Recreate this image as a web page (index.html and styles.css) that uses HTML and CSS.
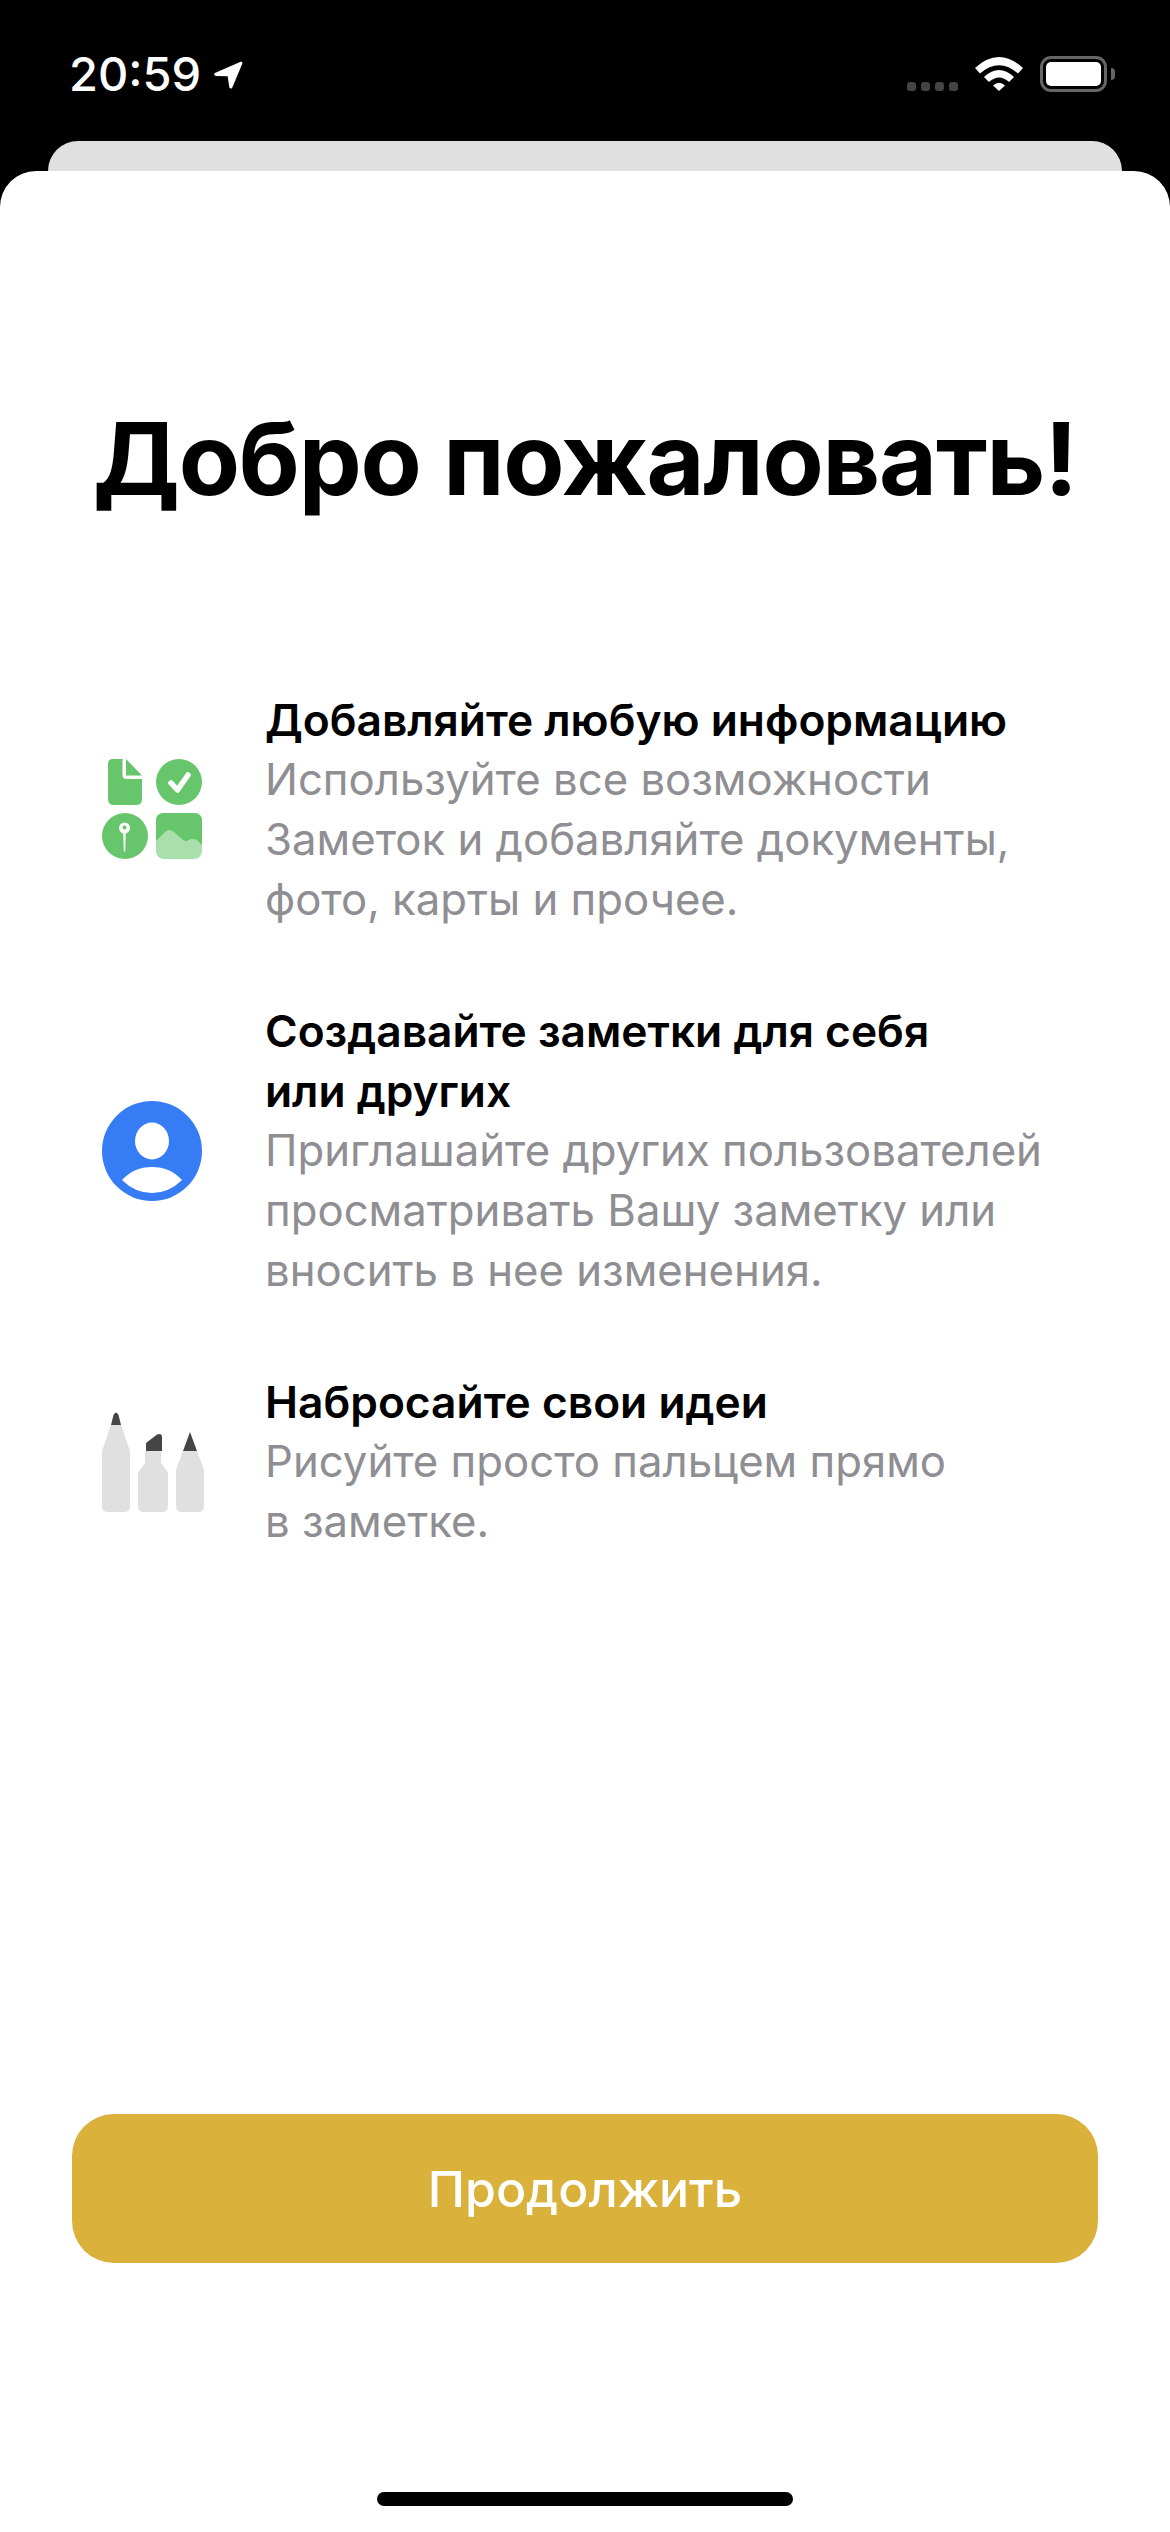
FILE: index.html
```html
<!DOCTYPE html>
<html lang="ru">
<head>
    <meta charset="utf-8">
    <title>Заметки</title>
    <link rel="stylesheet" href="styles.css">
</head>
<body>
    <div class="status">
        <div class="status-left">
            <span class="time">20:59</span>
            <svg class="arrow" width="30" height="31" viewBox="0 0 32 32">
                <path d="M2 14.5 L29.5 2.5 Q32 2 31.2 4.6 L20.5 30 Q18.6 32 17.4 29.6 L15.6 17.8 L3 17.6 Q0 16.2 2 14.5 Z" fill="#fff"/>
            </svg>
        </div>
        <div class="status-right">
            <div class="signal"><i></i><i></i><i></i><i></i></div>
            <svg class="wifi" width="48" height="36" viewBox="0 0 48 36">
                <path d="M0 13 Q24 -9 48 13 L43 18.5 Q24 2 5 18.5 Z" fill="#fff"/>
                <path d="M9 22 Q24 8 39 22 L34 27 Q24 18 14 27 Z" fill="#fff"/>
                <path d="M18 30.5 Q24 25 30 30.5 L24 36 Z" fill="#fff"/>
            </svg>
            <div class="battery"><div class="battery-level"></div></div>
            <div class="battery-cap"></div>
        </div>
    </div>

    <div class="back-card"></div>

    <div class="sheet">
        <h1 class="title">Добро пожаловать!</h1>

        <div class="rows">
            <div class="row">
                <div class="row-icon">
                    <svg width="102" height="102" viewBox="0 0 102 102">
                        <path d="M11 0 H20.500 V16 Q20.500 20 24.500 20 H40 V40 Q40 46 34 46 H12 Q6 46 6 40 V5 Q6 0 11 0 Z" fill="#67c56b"/>
                        <path d="M24 0 L40 16.500 H24 Z" fill="#67c56b"/>
                        <circle cx="77" cy="23" r="23" fill="#67c56b"/>
                        <path d="M69 24 L75.500 31 L86 16" fill="none" stroke="#fff" stroke-width="5.500" stroke-linecap="round" stroke-linejoin="round"/>
                        <circle cx="23" cy="77" r="23" fill="#67c56b"/>
                        <circle cx="22.500" cy="69" r="5.500" fill="#fff"/>
                        <circle cx="22.500" cy="68.500" r="2" fill="#67c56b"/>
                        <path d="M21.200 73 H23.800 L23.200 92 Q22.500 93.500 21.800 92 Z" fill="#fff"/>
                        <rect x="54" y="54" width="46" height="46" rx="8" fill="#a8dfab"/>
                        <path d="M62 54 H92 Q100 54 100 62 V86 L96 82 Q91 78 86 81.500 Q84 83 81 81 L72 73 Q67 69 63 73 L54 82 V62 Q54 54 62 54 Z" fill="#67c56b"/>
                    </svg>
                </div>
                <div class="row-text">
                    <div class="row-title">Добавляйте любую информацию</div>
                    <div class="row-desc">Используйте все возможности<br>Заметок и добавляйте документы,<br>фото, карты и прочее.</div>
                </div>
            </div>

            <div class="row">
                <div class="row-icon">
                    <svg width="100" height="100" viewBox="0 0 100 100">
                        <circle cx="50" cy="50" r="50" fill="#367df5"/>
                        <ellipse cx="50" cy="40" rx="17" ry="18.500" fill="#fff"/>
                        <path d="M20 79 Q32 66 50 66 Q68 66 80 79 Q67 92 50 92 Q33 92 20 79 Z" fill="#fff"/>
                    </svg>
                </div>
                <div class="row-text">
                    <div class="row-title">Создавайте заметки для себя<br>или других</div>
                    <div class="row-desc">Приглашайте других пользователей<br>просматривать Вашу заметку или<br>вносить в нее изменения.</div>
                </div>
            </div>

            <div class="row">
                <div class="row-icon">
                    <svg width="102" height="102" viewBox="0 0 102 102">
                        <path d="M9 14 H19 L27 37 Q28 39 28 42 V95 Q28 101 22 101 H6 Q0 101 0 95 V42 Q0 39 1 37 Z" fill="#e0e0e0"/>
                        <path d="M9 14 L11.500 4 Q14 -1 16.500 4 L19 14 Z" fill="#454545"/>
                        <path d="M43 40 H59 V52 L65 60 Q66 62 66 64 V95 Q66 101 60 101 H42 Q36 101 36 95 V64 Q36 62 37 60 L43 52 Z" fill="#e0e0e0"/>
                        <path d="M44 40 V32 L55 23.500 Q60 22 60 26 V40 Z" fill="#454545"/>
                        <path d="M81 40 H95 L101 56 Q102 58 102 61 V95 Q102 101 96 101 H80 Q74 101 74 95 V61 Q74 58 75 56 Z" fill="#e0e0e0"/>
                        <path d="M81 40 L88 21 L95 40 Z" fill="#454545"/>
                    </svg>
                </div>
                <div class="row-text">
                    <div class="row-title">Набросайте свои идеи</div>
                    <div class="row-desc">Рисуйте просто пальцем прямо<br>в заметке.</div>
                </div>
            </div>
        </div>

        <div class="footer">
            <button class="continue">Продолжить</button>
            <div class="home-bar"></div>
        </div>
    </div>
</body>
</html>
```

FILE: styles.css
```css
* {
    box-sizing: border-box;
}
html, body {
    height: 100%;
}
body {
    margin: 0;
    background-color: black;
    font-family: Inter, "Liberation Sans", sans-serif;
    display: flex;
    flex-direction: column;
}
.status {
    height: 141px;
    flex-shrink: 0;
    display: flex;
    justify-content: space-between;
    align-items: flex-start;
    padding: 49px 55px 0 69px;
    color: white;
}
.status-left {
    display: flex;
    align-items: center;
    gap: 12px;
}
.time {
    font-size: 47px;
    font-weight: 500;
    line-height: 50px;
}
.arrow {
    display: block;
}
.status-right {
    display: flex;
    align-items: flex-start;
    margin-top: 6px;
}
.signal {
    display: flex;
    gap: 5px;
    margin-top: 27px;
    margin-right: 17px;
}
.signal i {
    width: 9px;
    height: 9px;
    border-radius: 3px;
    background-color: #444;
}
.wifi {
    margin-right: 17px;
}
.battery {
    width: 67px;
    height: 36px;
    margin-top: 1px;
    border: 3px solid #666;
    border-radius: 11px;
    padding: 3px;
}
.battery-level {
    height: 100%;
    width: 100%;
    background-color: white;
    border-radius: 5px;
}
.battery-cap {
    width: 4px;
    height: 12px;
    margin-top: 13px;
    margin-left: 4px;
    background-color: #666;
    border-radius: 0 4px 4px 0;
}
.back-card {
    height: 30px;
    flex-shrink: 0;
    margin: 0 48px;
    background-color: #e0e0e0;
    border-radius: 30px 30px 0 0;
}
.sheet {
    flex: 1;
    display: flex;
    flex-direction: column;
    background-color: white;
    border-radius: 36px 36px 0 0;
    color: black;
}
.title {
    margin: 228px 0 0;
    text-align: center;
    font-size: 100px;
    font-weight: 700;
    letter-spacing: -1.2px;
    line-height: 120px;
}
.rows {
    display: flex;
    flex-direction: column;
    gap: 71px;
    margin-top: 171px;
    padding-left: 102px;
}
.row {
    display: flex;
    align-items: center;
    gap: 61px;
}
.row-icon {
    width: 102px;
    flex-shrink: 0;
}
.row-icon svg {
    display: block;
    overflow: visible;
}
.row-text {
    font-size: 43.700px;
    line-height: 60px;
}
.row-title {
    font-size: 44.300px;
    font-weight: 600;
}
.row-desc {
    color: #8e8e93;
}
.footer {
    margin-top: auto;
    display: flex;
    flex-direction: column;
    align-items: center;
    padding-bottom: 26px;
}
.continue {
    width: 1026px;
    height: 149px;
    border: none;
    border-radius: 42px;
    background-color: #dab13b;
    color: white;
    font-family: inherit;
    font-size: 50px;
    font-weight: 500;
}
.home-bar {
    width: 416px;
    height: 14px;
    margin-top: 229px;
    border-radius: 7px;
    background-color: black;
}
```
